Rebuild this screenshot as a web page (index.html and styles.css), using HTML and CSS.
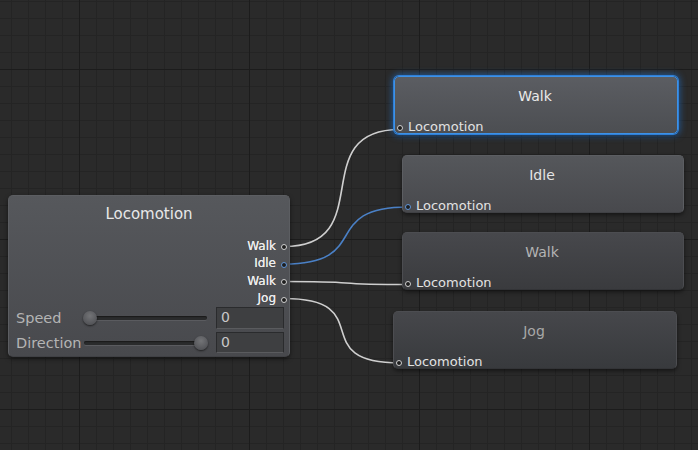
FILE: index.html
```html
<!DOCTYPE html>
<html>
<head>
<meta charset="utf-8">
<link rel="stylesheet" href="styles.css">
</head>
<body>
<div class="canvas">
  <svg class="wires" width="698" height="450" viewBox="0 0 698 450">
    <path class="wire" d="M284 246.5 C380 246.5, 304 129.5, 400 129.5"/>
    <path class="wire blue" d="M284 264 C374 264, 318 207, 408 207"/>
    <path class="wire" d="M284 281.5 C374 281.5, 318 284.5, 408 284.5"/>
    <path class="wire" d="M284 298.5 C380 298.5, 304 363, 400 363"/>
  </svg>

  <div class="node source">
    <div class="title">Locomotion</div>
    <div class="outputs">
      <div class="out"><span>Walk</span><i class="port"></i></div>
      <div class="out"><span>Idle</span><i class="port blue"></i></div>
      <div class="out"><span>Walk</span><i class="port"></i></div>
      <div class="out"><span>Jog</span><i class="port"></i></div>
    </div>
    <div class="param">
      <span class="plabel">Speed</span>
      <div class="slider"><div class="thumb" style="left:0px"></div></div>
      <div class="field">0</div>
    </div>
    <div class="param dir">
      <span class="plabel">Direction</span>
      <div class="slider"><div class="thumb" style="left:111px"></div></div>
      <div class="field">0</div>
    </div>
  </div>

  <div class="node state s-walk selected">
    <div class="title">Walk</div>
    <div class="in"><i class="port"></i><span>Locomotion</span></div>
  </div>
  <div class="node state s-idle">
    <div class="title">Idle</div>
    <div class="in"><i class="port blue"></i><span>Locomotion</span></div>
  </div>
  <div class="node state s-walk2 dim">
    <div class="title">Walk</div>
    <div class="in"><i class="port"></i><span>Locomotion</span></div>
  </div>
  <div class="node state s-jog dim">
    <div class="title">Jog</div>
    <div class="in"><i class="port"></i><span>Locomotion</span></div>
  </div>
</div>
</body>
</html>
```
FILE: styles.css
```css
html, body {
  margin: 0;
  height: 100%;
}
body {
  background-color: #2a2a2a;
  background-image:
    linear-gradient(to right, #1c1c1c 1px, transparent 1px),
    linear-gradient(to bottom, #1c1c1c 1px, transparent 1px),
    linear-gradient(to right, #242424 1px, transparent 1px),
    linear-gradient(to bottom, #242424 1px, transparent 1px);
  background-size: 170px 170px, 170px 170px, 17px 17px, 17px 17px;
  background-position: 79px 0, 0 69px, 11px 0, 0 1px;
  font-family: "DejaVu Sans", "Noto Sans", sans-serif;
  overflow: hidden;
}
.canvas {
  position: relative;
  width: 698px;
  height: 450px;
}
.wires {
  position: absolute;
  left: 0;
  top: 0;
}
.wire {
  fill: none;
  stroke: #cfcfcf;
  stroke-width: 1.6;
}
.wire.blue {
  stroke: #4a80c6;
}

.node {
  position: absolute;
  box-sizing: border-box;
  border-radius: 5px;
  border: 1px solid #5c5e62;
  border-bottom-color: #404145;
  box-shadow: 0 2px 4px rgba(0, 0, 0, 0.5);
  color: #e4e4e4;
}
.port {
  display: block;
  flex: none;
  width: 4px;
  height: 4px;
  border: 1.5px solid #d0d0d0;
  border-radius: 50%;
  background: #1e1e1e;
  margin-top: 3px;
}
.port.blue {
  border-color: #5f95d8;
}

/* source node */
.source {
  left: 8px;
  top: 195px;
  width: 282px;
  height: 162px;
  background: linear-gradient(#56585c, #48494d);
  padding: 9px 0 0 0;
  display: flex;
  flex-direction: column;
}
.source .title {
  text-align: center;
  font-size: 15px;
  line-height: 18px;
  color: #e8e8e8;
}
.outputs {
  margin-top: 14px;
  display: flex;
  flex-direction: column;
}
.out {
  height: 17.5px;
  display: flex;
  justify-content: flex-end;
  align-items: center;
  gap: 5px;
  padding-right: 2px;
  font-size: 12px;
  color: #ececec;
  text-shadow: 0 0 0.5px #ececec;
}
.param {
  display: flex;
  align-items: center;
  height: 22px;
  padding-left: 7px;
  color: #b4b4b4;
  font-size: 14.5px;
}
.param.dir {
  margin-top: 3px;
  height: 21px;
}
.plabel {
  width: 67px;
  flex: none;
}
.slider {
  position: relative;
  width: 125px;
  height: 14px;
  flex: none;
}
.slider::before {
  content: "";
  position: absolute;
  left: 1px;
  right: 1px;
  top: 5px;
  height: 4px;
  border-radius: 2px;
  background: #2a2b2c;
  box-shadow: inset 0 1px 1px #1a1a1a, 0 1px 0 #5a5b5f;
}
.thumb {
  position: absolute;
  top: 0;
  width: 14px;
  height: 14px;
  border-radius: 50%;
  background: radial-gradient(circle at 50% 35%, #737477, #55565a 70%, #48494c);
  box-shadow: 0 1px 2px rgba(0, 0, 0, 0.6);
}
.field {
  margin-left: 8px;
  width: 68px;
  height: 100%;
  box-sizing: border-box;
  background: #3e3f41;
  border: 1px solid #2a2b2d;
  border-bottom-color: #5a5b5e;
  color: #c8c8c8;
  font-size: 14px;
  line-height: 19px;
  padding-left: 4px;
}

/* state nodes */
.state {
  height: 58px;
  display: flex;
  flex-direction: column;
  justify-content: space-between;
  padding: 10px 4px 0 2px;
}
.state .title {
  text-align: center;
  font-size: 14px;
  line-height: 18px;
}
.state .in {
  display: flex;
  align-items: center;
  gap: 5px;
  height: 14px;
  font-size: 13px;
  color: #e2e2e2;
}
.s-walk {
  left: 394px;
  top: 76px;
  width: 284px;
  background: linear-gradient(#5b5d62, #4c4e52);
}
.s-walk.selected {
  border-color: #3d92e8;
  box-shadow: 0 0 0 1px #2f7fd6, 0 0 6px 2px rgba(40, 130, 230, 0.55), 0 2px 4px rgba(0, 0, 0, 0.5);
}
.s-walk .title {
  color: #eaeaea;
}
.s-idle {
  left: 402px;
  top: 155px;
  width: 282px;
  background: linear-gradient(#55575b, #48494d);
}
.s-walk2 {
  left: 402px;
  top: 232px;
  width: 282px;
  background: linear-gradient(#47484c, #3a3b3e);
  border-color: #4c4d51;
  border-bottom-color: #333437;
}
.s-jog {
  left: 393px;
  top: 311px;
  width: 284px;
  background: linear-gradient(#46474b, #383a3d);
  border-color: #4c4d51;
  border-bottom-color: #333437;
}
.dim .title {
  color: #b4b4b4;
}
.s-jog .title {
  color: #a8a8a8;
}
```
